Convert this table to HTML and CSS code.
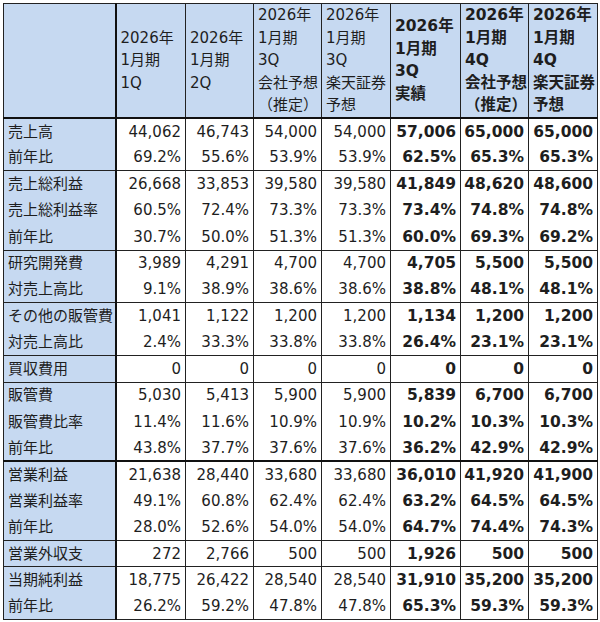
FILE: index.html
```html
<!DOCTYPE html>
<html lang="ja">
<head>
<meta charset="utf-8">
<title>業績表</title>
<link rel="stylesheet" href="styles.css">
</head>
<body>
<table class="fin">
  <colgroup>
    <col class="c-label">
    <col class="c1">
    <col class="c2">
    <col class="c3">
    <col class="c4">
    <col class="c5">
    <col class="c6">
    <col class="c7">
  </colgroup>
  <thead>
    <tr>
      <th class="corner"></th>
      <th>2026年<br>1月期<br>1Q</th>
      <th>2026年<br>1月期<br>2Q</th>
      <th>2026年<br>1月期<br>3Q<br>会社予想<br>（推定）</th>
      <th>2026年<br>1月期<br>3Q<br>楽天証券<br>予想</th>
      <th class="b">2026年<br>1月期<br>3Q<br>実績</th>
      <th class="b">2026年<br>1月期<br>4Q<br>会社予想<br>（推定）</th>
      <th class="b">2026年<br>1月期<br>4Q<br>楽天証券<br>予想</th>
    </tr>
  </thead>
  <tbody>
    <tr><th>売上高</th><td>44,062</td><td>46,743</td><td>54,000</td><td>54,000</td><td class="b">57,006</td><td class="b">65,000</td><td class="b">65,000</td></tr>
    <tr><th>前年比</th><td>69.2%</td><td>55.6%</td><td>53.9%</td><td>53.9%</td><td class="b">62.5%</td><td class="b">65.3%</td><td class="b">65.3%</td></tr>
  </tbody>
  <tbody>
    <tr><th>売上総利益</th><td>26,668</td><td>33,853</td><td>39,580</td><td>39,580</td><td class="b">41,849</td><td class="b">48,620</td><td class="b">48,600</td></tr>
    <tr><th>売上総利益率</th><td>60.5%</td><td>72.4%</td><td>73.3%</td><td>73.3%</td><td class="b">73.4%</td><td class="b">74.8%</td><td class="b">74.8%</td></tr>
    <tr><th>前年比</th><td>30.7%</td><td>50.0%</td><td>51.3%</td><td>51.3%</td><td class="b">60.0%</td><td class="b">69.3%</td><td class="b">69.2%</td></tr>
  </tbody>
  <tbody>
    <tr><th>研究開発費</th><td>3,989</td><td>4,291</td><td>4,700</td><td>4,700</td><td class="b">4,705</td><td class="b">5,500</td><td class="b">5,500</td></tr>
    <tr><th>対売上高比</th><td>9.1%</td><td>38.9%</td><td>38.6%</td><td>38.6%</td><td class="b">38.8%</td><td class="b">48.1%</td><td class="b">48.1%</td></tr>
  </tbody>
  <tbody>
    <tr><th>その他の販管費</th><td>1,041</td><td>1,122</td><td>1,200</td><td>1,200</td><td class="b">1,134</td><td class="b">1,200</td><td class="b">1,200</td></tr>
    <tr><th>対売上高比</th><td>2.4%</td><td>33.3%</td><td>33.8%</td><td>33.8%</td><td class="b">26.4%</td><td class="b">23.1%</td><td class="b">23.1%</td></tr>
  </tbody>
  <tbody>
    <tr><th>買収費用</th><td>0</td><td>0</td><td>0</td><td>0</td><td class="b">0</td><td class="b">0</td><td class="b">0</td></tr>
  </tbody>
  <tbody>
    <tr><th>販管費</th><td>5,030</td><td>5,413</td><td>5,900</td><td>5,900</td><td class="b">5,839</td><td class="b">6,700</td><td class="b">6,700</td></tr>
    <tr><th>販管費比率</th><td>11.4%</td><td>11.6%</td><td>10.9%</td><td>10.9%</td><td class="b">10.2%</td><td class="b">10.3%</td><td class="b">10.3%</td></tr>
    <tr><th>前年比</th><td>43.8%</td><td>37.7%</td><td>37.6%</td><td>37.6%</td><td class="b">36.2%</td><td class="b">42.9%</td><td class="b">42.9%</td></tr>
  </tbody>
  <tbody class="thick">
    <tr><th>営業利益</th><td>21,638</td><td>28,440</td><td>33,680</td><td>33,680</td><td class="b">36,010</td><td class="b">41,920</td><td class="b">41,900</td></tr>
    <tr><th>営業利益率</th><td>49.1%</td><td>60.8%</td><td>62.4%</td><td>62.4%</td><td class="b">63.2%</td><td class="b">64.5%</td><td class="b">64.5%</td></tr>
    <tr><th>前年比</th><td>28.0%</td><td>52.6%</td><td>54.0%</td><td>54.0%</td><td class="b">64.7%</td><td class="b">74.4%</td><td class="b">74.3%</td></tr>
  </tbody>
  <tbody>
    <tr><th>営業外収支</th><td>272</td><td>2,766</td><td>500</td><td>500</td><td class="b">1,926</td><td class="b">500</td><td class="b">500</td></tr>
  </tbody>
  <tbody>
    <tr><th>当期純利益</th><td>18,775</td><td>26,422</td><td>28,540</td><td>28,540</td><td class="b">31,910</td><td class="b">35,200</td><td class="b">35,200</td></tr>
    <tr><th>前年比</th><td>26.2%</td><td>59.2%</td><td>47.8%</td><td>47.8%</td><td class="b">65.3%</td><td class="b">59.3%</td><td class="b">59.3%</td></tr>
  </tbody>
</table>
</body>
</html>
```

FILE: styles.css
```css
html, body {
  margin: 0;
  padding: 0;
  background: #ffffff;
}

body {
  padding: 3px 0 0 3px;
  font-family: "DejaVu Sans", "Noto Sans CJK JP", sans-serif;
  color: #1e1e1e;
}

.fin {
  border-collapse: collapse;
  table-layout: fixed;
  width: 594px;
  font-size: 15px;
  border: 1px solid #222;
}

.c-label { width: 112px; }
.c1 { width: 70px; }
.c2 { width: 68px; }
.c3 { width: 68px; }
.c4 { width: 69px; }
.c5 { width: 70px; }
.c6 { width: 68px; }
.c7 { width: 69px; }

.fin thead th {
  height: 112px;
  padding: 0 0 0 4px;
  background: #c6d9f1;
  font-weight: normal;
  text-align: left;
  vertical-align: middle;
  line-height: 22.6px;
  border: 1px solid #222;
  border-bottom: 2px solid #111;
  white-space: nowrap;
}

.fin thead th.corner {
  border-right: 2px solid #111;
}

.fin thead th.b {
  font-weight: bold;
}

.fin tbody {
  border-top: 1px solid #222;
}

.fin tbody.thick {
  border-top: 2px solid #111;
}

.fin tbody tr {
  height: 26.42px;
}

.fin tbody th {
  background: #c6d9f1;
  font-weight: normal;
  text-align: left;
  padding: 0 0 0 4px;
  border-right: 2px solid #111;
  white-space: nowrap;
  line-height: 20px;
}

.fin tbody td {
  text-align: right;
  padding: 0 4px 0 0;
  border-left: 1px solid #222;
  border-right: 1px solid #222;
  white-space: nowrap;
  line-height: 20px;
}

.fin .b {
  font-weight: bold;
  font-size: 15.5px;
}
```
